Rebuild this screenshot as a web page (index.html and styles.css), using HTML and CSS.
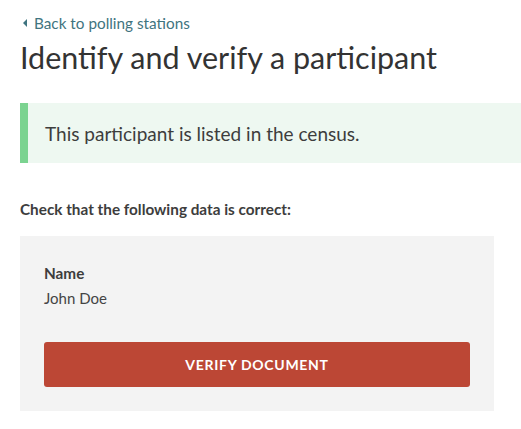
FILE: index.html
```html
<!DOCTYPE html>
<html lang="en">
<head>
<meta charset="utf-8">
<title>Identify and verify a participant</title>
<link rel="stylesheet" href="styles.css">
</head>
<body>
<main class="page">
  <a class="back" href="#"><span class="back-arrow"></span>Back to polling stations</a>
  <h1 class="title">Identify and verify a participant</h1>
  <div class="callout">This participant is listed in the census.</div>
  <p class="check">Check that the following data is correct:</p>
  <section class="card">
    <div class="field-label">Name</div>
    <div class="field-value">John Doe</div>
    <button class="btn" type="button">VERIFY DOCUMENT</button>
  </section>
</main>
</body>
</html>
```
FILE: styles.css
```css
* { box-sizing: border-box; }
html, body { margin: 0; padding: 0; background: #fff; }
body {
  font-family: Lato, "Liberation Sans", sans-serif;
  color: #3d3d3d;
}
.page {
  padding: 13px 0 0 20px;
  display: flex;
  flex-direction: column;
  align-items: flex-start;
}
.back {
  color: #3f7480;
  text-decoration: none;
  font-size: 15.3px;
  line-height: 20px;
  display: flex;
  align-items: center;
  gap: 7px;
  padding-left: 3px;
}
.back-arrow {
  width: 0; height: 0;
  border-top: 4.5px solid transparent;
  border-bottom: 4.5px solid transparent;
  border-right: 4.5px solid #3f7480;
}
.title {
  margin: 4px 0 0 0;
  font-size: 30.5px;
  font-weight: 400;
  line-height: 40px;
  color: #333;
}
.callout {
  margin-top: 26px;
  align-self: stretch;
  height: 60px;
  background: #eef8f1;
  border-left: 8px solid #7bd390;
  padding-left: 17px;
  display: flex;
  align-items: center;
  font-size: 19px;
  color: #3d3d3d;
}
.check {
  margin: 36px 0 0 0;
  font-size: 15.3px;
  font-weight: 700;
  line-height: 20px;
  color: #3d3d3d;
}
.card {
  margin-top: 17px;
  width: 474px;
  background: #f3f3f3;
  padding: 27px 24px 24px 24px;
  display: flex;
  flex-direction: column;
}
.field-label {
  font-size: 15.3px;
  font-weight: 700;
  line-height: 20px;
  color: #3d3d3d;
}
.field-value {
  font-size: 15px;
  line-height: 20px;
  margin-top: 5px;
  color: #444;
}
.btn {
  margin-top: 34px;
  height: 45px;
  border: 0;
  border-radius: 3px;
  background: #bc4735;
  color: #fff;
  font-family: inherit;
  font-size: 14px;
  font-weight: 700;
  letter-spacing: 0.7px;
  cursor: pointer;
}
```
